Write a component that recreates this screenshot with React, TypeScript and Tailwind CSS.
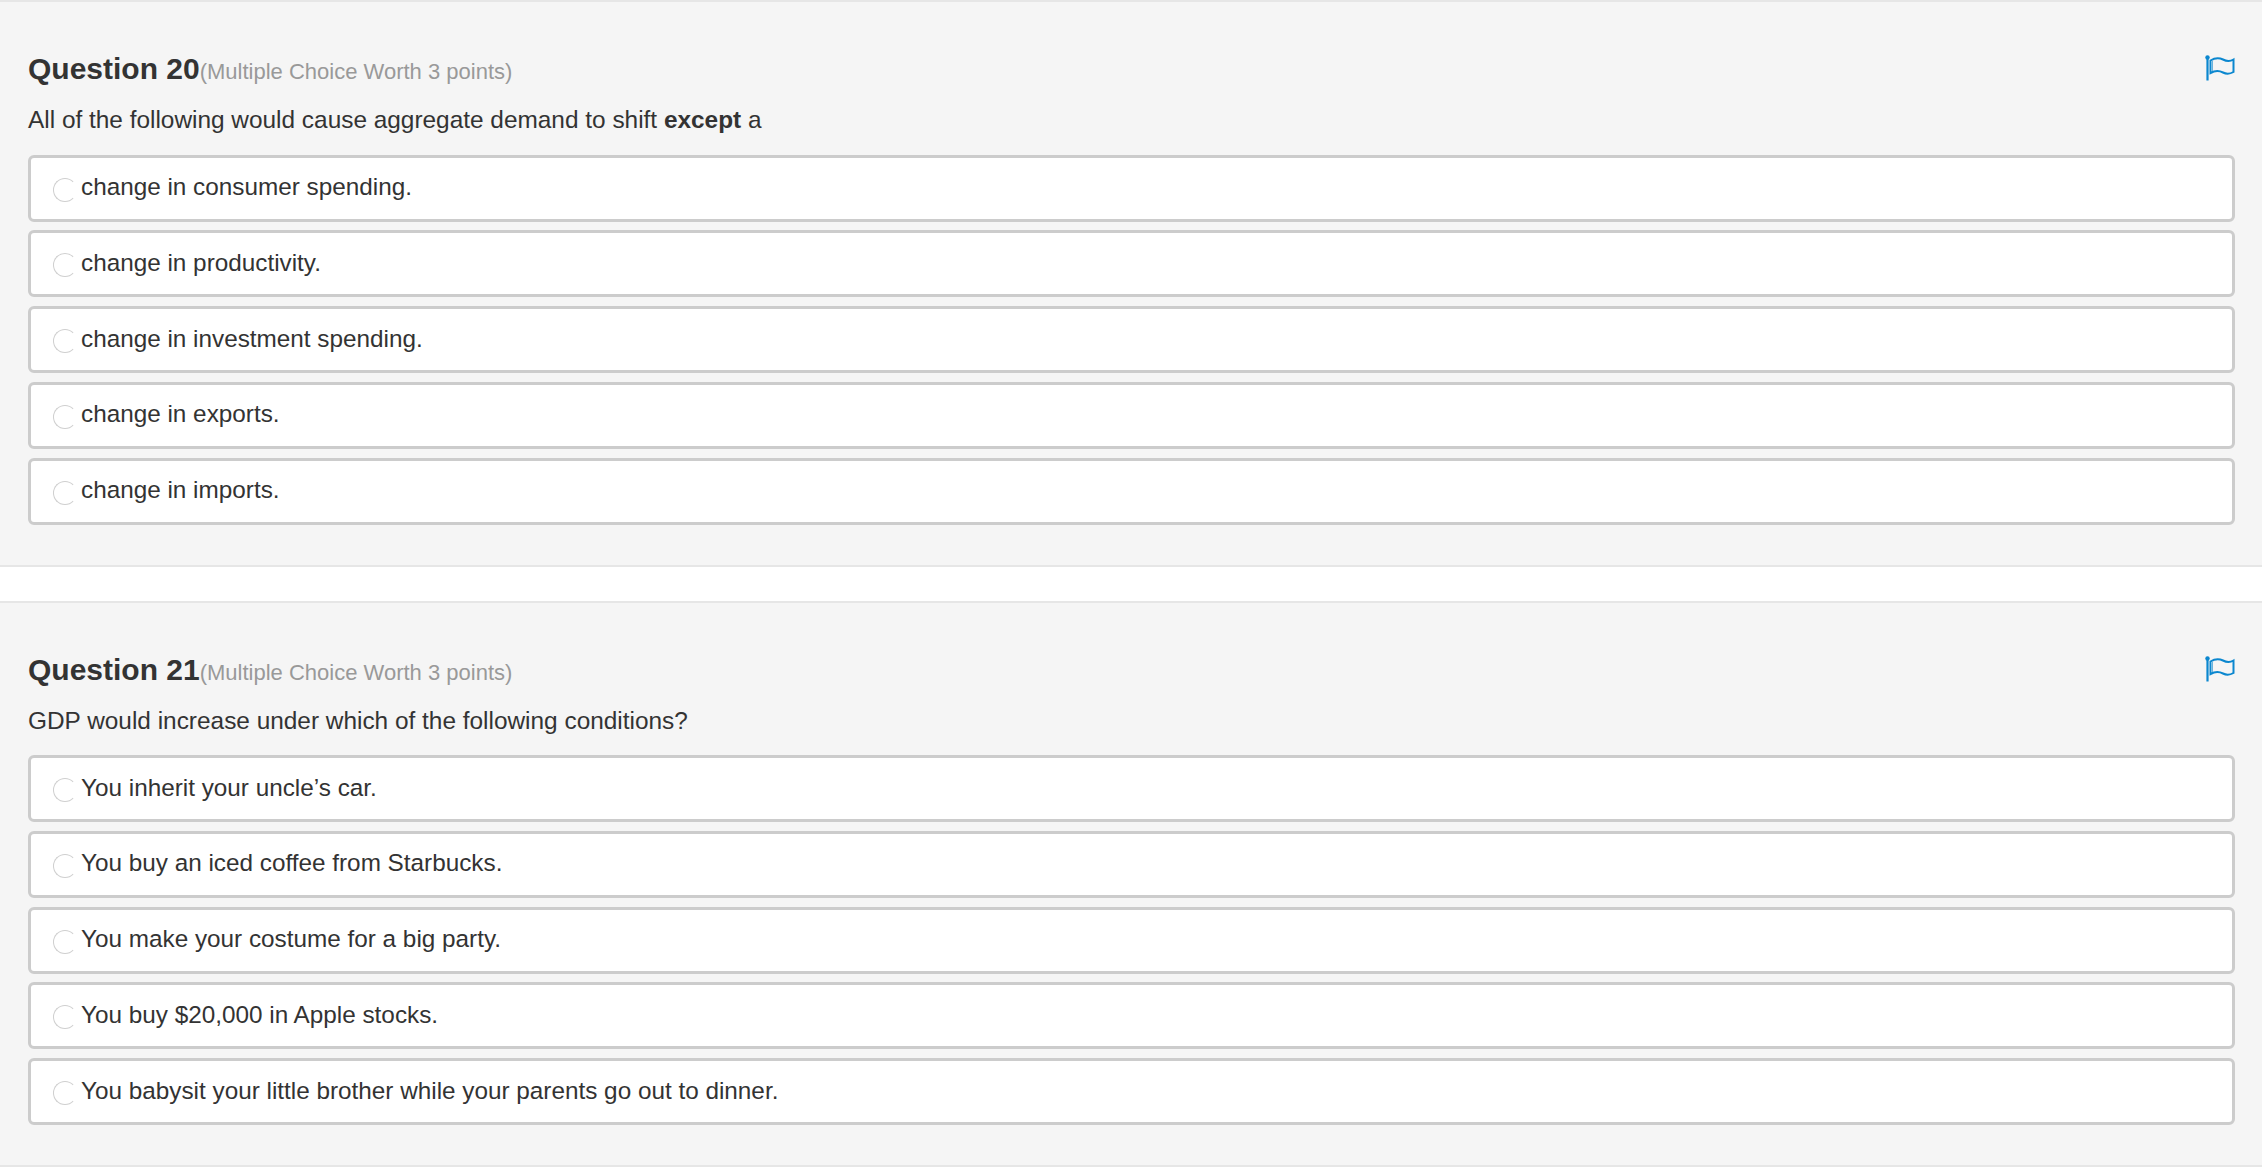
import React from 'react';

interface QuestionProps {
    number: number;
    prompt: React.ReactNode;
    options: string[];
}

const FlagIcon = () => (
    <svg width="30" height="26" viewBox="0 0 30 26" fill="none" className="text-[#0b87cf]">
        <circle cx="2.5" cy="2.5" r="2.2" fill="currentColor" />
        <path d="M2.5 3V25.5" stroke="currentColor" strokeWidth="2.2" />
        <path d="M5.5 5.5C11 2 15 3 18 4.5C21 6 25 6.5 28.5 4.5V17C25 19 21 19 18 17.5C15 16 11 15 5.5 18V5.5Z" stroke="currentColor" strokeWidth="2" />
        <path d="M7.5 6V16.5" stroke="currentColor" strokeWidth="1" opacity="0.6" />
    </svg>
);

const Radio = () => (
    <span className="w-[24px] h-[24px] rounded-full border-[1.5px] border-[#cfcfcf] border-r-white shrink-0 mt-[3px] mr-[4px]" />
);

const Question = ({ number, prompt, options }: QuestionProps) => (
    <section className="bg-[#f5f5f5] border-y-2 border-[#e6e6e6] pl-[28px] pr-[27px] pt-[46px] pb-[40px]">
        <div className="flex items-start justify-between">
            <div className="flex items-baseline h-[42px]">
                <h2 className="text-[30px] leading-[42px] font-bold text-[#333333]">Question {number}</h2>
                <span className="text-[22px] text-[#999999]">(Multiple Choice Worth 3 points)</span>
            </div>
            <div className="pt-[7px]"><FlagIcon /></div>
        </div>
        <p className="text-[24.4px] leading-[34px] text-[#333333] mt-[13px] mb-[17.5px]">{prompt}</p>
        <div className="flex flex-col gap-[8.75px]">
            {options.map(option => (
                <div key={option} className="h-[67px] bg-white border-[3px] border-[#cccccc] rounded-[6px] pl-[22px] flex items-center">
                    <Radio />
                    <span className="text-[24.3px] leading-[34px] text-[#333333] -mt-[2px]">{option}</span>
                </div>
            ))}
        </div>
    </section>
);

export default function App() {
    return (
        <div className="min-h-[1170px] bg-white font-['Liberation_Sans',Arial,sans-serif]">
            <Question
                number={20}
                prompt={<>All of the following would cause aggregate demand to shift <strong>except</strong> a</>}
                options={[
                    'change in consumer spending.',
                    'change in productivity.',
                    'change in investment spending.',
                    'change in exports.',
                    'change in imports.',
                ]}
            />
            <div className="h-[34px]" />
            <Question
                number={21}
                prompt="GDP would increase under which of the following conditions?"
                options={[
                    'You inherit your uncle’s car.',
                    'You buy an iced coffee from Starbucks.',
                    'You make your costume for a big party.',
                    'You buy $20,000 in Apple stocks.',
                    'You babysit your little brother while your parents go out to dinner.',
                ]}
            />
        </div>
    );
}
